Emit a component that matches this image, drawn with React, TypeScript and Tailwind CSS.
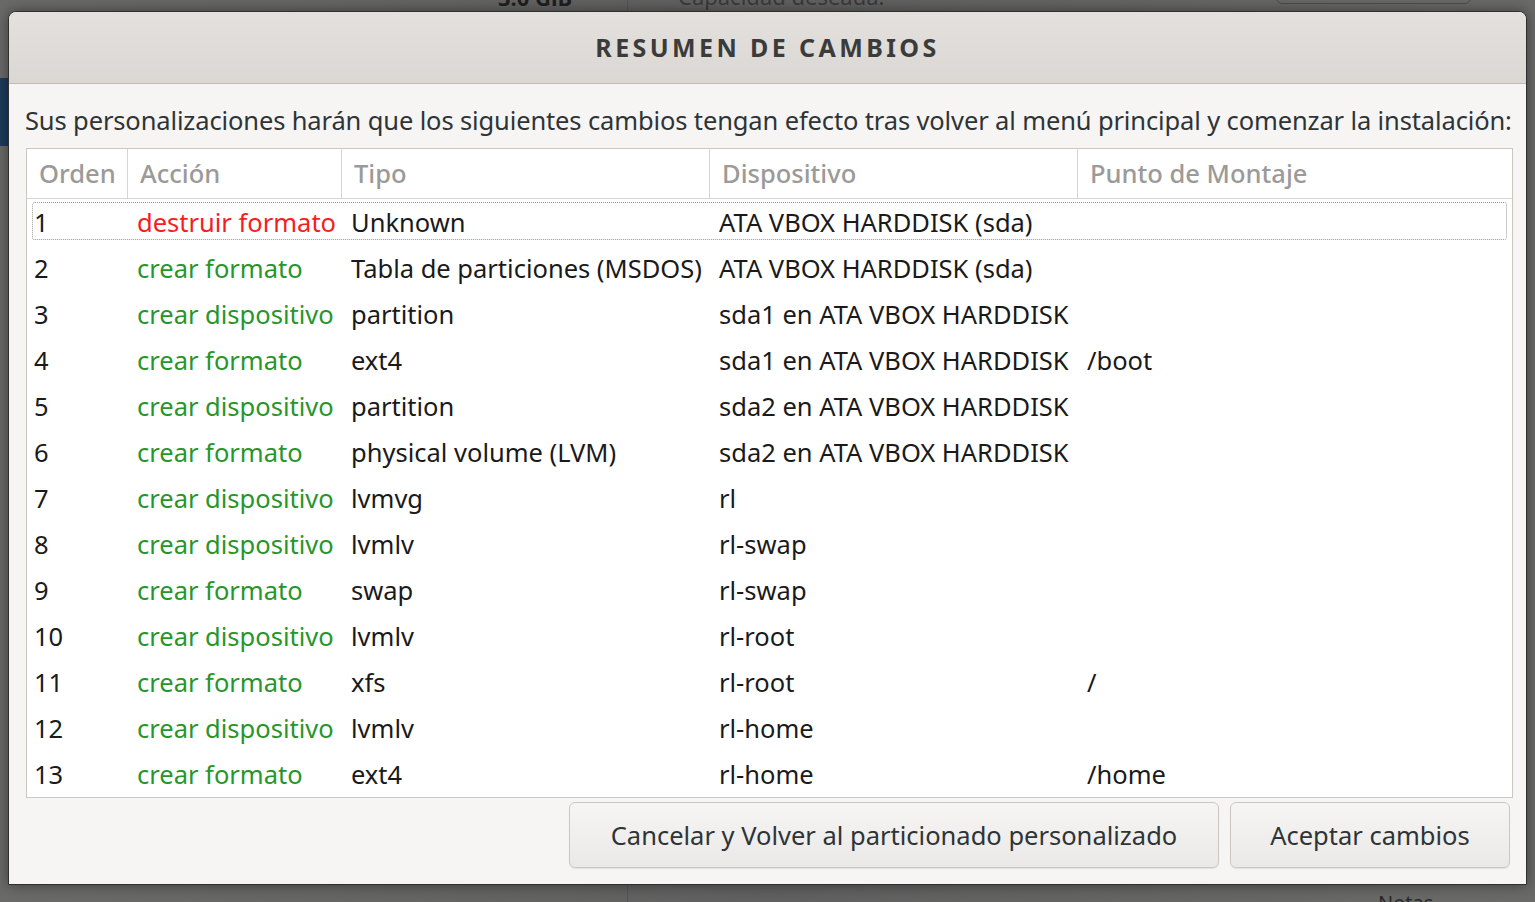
import React from 'react'

const FONT = { fontFamily: '"Noto Sans", "Open Sans", sans-serif' }

type Row = {
  n: number
  action: string
  destroy?: boolean
  kind: string
  device: string
  mount: string
}

const ROWS: Row[] = [
  { n: 1, action: 'destruir formato', destroy: true, kind: 'Unknown', device: 'ATA VBOX HARDDISK (sda)', mount: '' },
  { n: 2, action: 'crear formato', kind: 'Tabla de particiones (MSDOS)', device: 'ATA VBOX HARDDISK (sda)', mount: '' },
  { n: 3, action: 'crear dispositivo', kind: 'partition', device: 'sda1 en ATA VBOX HARDDISK', mount: '' },
  { n: 4, action: 'crear formato', kind: 'ext4', device: 'sda1 en ATA VBOX HARDDISK', mount: '/boot' },
  { n: 5, action: 'crear dispositivo', kind: 'partition', device: 'sda2 en ATA VBOX HARDDISK', mount: '' },
  { n: 6, action: 'crear formato', kind: 'physical volume (LVM)', device: 'sda2 en ATA VBOX HARDDISK', mount: '' },
  { n: 7, action: 'crear dispositivo', kind: 'lvmvg', device: 'rl', mount: '' },
  { n: 8, action: 'crear dispositivo', kind: 'lvmlv', device: 'rl-swap', mount: '' },
  { n: 9, action: 'crear formato', kind: 'swap', device: 'rl-swap', mount: '' },
  { n: 10, action: 'crear dispositivo', kind: 'lvmlv', device: 'rl-root', mount: '' },
  { n: 11, action: 'crear formato', kind: 'xfs', device: 'rl-root', mount: '/' },
  { n: 12, action: 'crear dispositivo', kind: 'lvmlv', device: 'rl-home', mount: '' },
  { n: 13, action: 'crear formato', kind: 'ext4', device: 'rl-home', mount: '/home' },
]

const COLS = ['w-[101px]', 'w-[214px]', 'w-[368px]', 'w-[368px]', 'flex-1']
const HEADERS = ['Orden', 'Acción', 'Tipo', 'Dispositivo', 'Punto de Montaje']

function Backdrop() {
  return (
    <>
      {/* dimmed installer behind the dialog */}
      <div className="absolute left-0 top-[78px] w-[8px] h-[68px] bg-[#1d3a5c]" />
      <div className="absolute left-[627px] top-0 w-px h-[11px] bg-[#555]" />
      <div className="absolute left-[627px] top-[885px] w-px h-[17px] bg-[#555]" />
      <div className="absolute left-[498px] top-[-17px] text-[22px] leading-[28px] font-bold text-[#1f1f1f]">3.0 GiB</div>
      <div className="absolute left-[678px] top-[-18px] text-[22px] leading-[28px] text-[#3a3a3a]">Capacidad deseada:</div>
      <div className="absolute left-[1276px] top-[-20px] w-[195px] h-[24px] rounded-[6px] border border-[#4d4d4d]" />
      <div className="absolute left-[1378px] top-[890px] text-[20px] leading-[26px] text-[#2a2a2a]">Notas</div>
    </>
  )
}

export default function App() {
  return (
    <div
      className="relative w-[1535px] h-[902px] overflow-hidden bg-[linear-gradient(90deg,#6a6a68,#606060_50%,#6a6a68)]"
      style={FONT}
    >
      <Backdrop />

      {/* Dialog */}
      <div className="absolute left-[8px] top-[11px] w-[1519px] h-[874px] flex flex-col rounded-t-[8px] border border-[#2f2f2f] bg-[#f6f5f4] shadow-[0_0_14px_rgba(0,0,0,0.45)] overflow-hidden">
        <div className="h-[72px] shrink-0 flex items-center justify-center border-b border-[#c2bcb5] bg-[linear-gradient(#e3e0dd,#dbd8d4)]">
          <h1 className="text-[25px] font-bold tracking-[3.4px] text-[#3b3b3b]">RESUMEN DE CAMBIOS</h1>
        </div>

        <div className="flex-1 flex flex-col px-[16px]">
          <p className="h-[64px] flex items-center pt-[8px] text-[25.5px] text-[#2e3436] tracking-[-0.13px] whitespace-nowrap">
            Sus personalizaciones harán que los siguientes cambios tengan efecto tras volver al menú principal y comenzar la instalación:
          </p>

          {/* Table */}
          <div className="w-[1487px] h-[650px] ml-px border border-[#cdc7c2] bg-white flex flex-col overflow-hidden">
            <div className="h-[50px] shrink-0 flex border-b border-[#d8d4d0]">
              {HEADERS.map((h, i) => (
                <div
                  key={h}
                  className={`${COLS[i]} flex items-center pl-[12px] text-[25.5px] font-medium text-[#9b9a98] ${i < 4 ? 'border-r border-[#d8d4d0]' : ''}`}
                >
                  {h}
                </div>
              ))}
            </div>
            {ROWS.map((r) => (
              <div key={r.n} className="relative h-[46px] shrink-0 flex items-center text-[25.5px] text-[#1a1a1a]">
                {r.n === 1 && (
                  <div className="absolute left-[5px] right-[5px] top-[3px] bottom-[5px] rounded-[3px] border border-dotted border-[#9c9a97]" />
                )}
                <div className={`${COLS[0]} pl-[7px]`}>{r.n}</div>
                <div className={`${COLS[1]} pl-[9px] whitespace-nowrap ${r.destroy ? 'text-[#f81d1d]' : 'text-[#26962a]'}`}>{r.action}</div>
                <div className={`${COLS[2]} pl-[9px] whitespace-nowrap`}>{r.kind}</div>
                <div className={`${COLS[3]} pl-[9px] whitespace-nowrap`}>{r.device}</div>
                <div className={`${COLS[4]} pl-[9px]`}>{r.mount}</div>
              </div>
            ))}
          </div>

          {/* Buttons */}
          <div className="flex justify-end gap-[11px] mt-[4px]">
            <button className="w-[650px] h-[66px] rounded-[6px] border border-[#cdc7c2] bg-[linear-gradient(#f6f5f4,#ebe9e7)] shadow-[0_1px_1px_rgba(0,0,0,0.08)] text-[25.5px] text-[#2e3436]">
              Cancelar y Volver al particionado personalizado
            </button>
            <button className="w-[280px] h-[66px] rounded-[6px] border border-[#cdc7c2] bg-[linear-gradient(#f6f5f4,#ebe9e7)] shadow-[0_1px_1px_rgba(0,0,0,0.08)] text-[25.5px] text-[#2e3436]">
              Aceptar cambios
            </button>
          </div>
        </div>
      </div>
    </div>
  )
}
